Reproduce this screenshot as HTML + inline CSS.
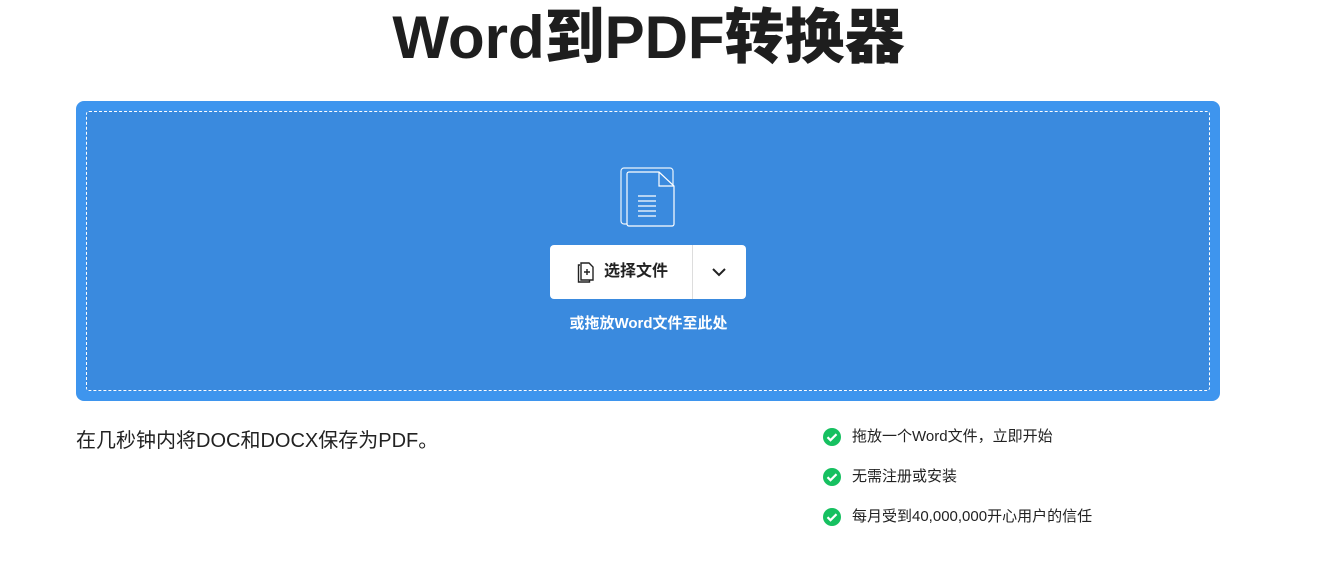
<!DOCTYPE html>
<html><head><meta charset="utf-8"><style>
body{margin:0;width:1317px;height:570px;background:#fff;font-family:"Liberation Sans","Noto Sans CJK SC",sans-serif;position:relative;overflow:hidden;color:#222}
h1{position:absolute;left:0;width:1297px;top:0;margin:0;text-align:center;font-size:60px;line-height:76px;font-weight:900;color:#1e1e1e;letter-spacing:0px}
.box{position:absolute;left:76px;top:101px;width:1144px;height:300px;background:#3e95ee;border-radius:8px}
.inner{position:absolute;left:10px;top:10px;right:10px;bottom:10px;background:#3a8ade;border:1px dashed #fff;border-radius:3px}
.btn{position:absolute;left:550px;top:245px;width:196px;height:54px;background:#fff;border-radius:4px}
.btn .sep{position:absolute;left:142px;top:0;width:1px;height:54px;background:#ddd}
.btn .t{position:absolute;left:54px;top:15px;font-size:16px;font-weight:bold;color:#222;line-height:24px}
.drop{position:absolute;left:0;width:1297px;top:313px;text-align:center;color:#fff;font-size:15px;font-weight:bold;line-height:22px}
.desc{position:absolute;left:76px;top:427px;font-size:20px;line-height:28px;color:#222}
.li{position:absolute;left:823px;font-size:15px;color:#222;line-height:20px}
.li svg{position:absolute;left:0;top:1px}
.li span{position:absolute;left:29px;white-space:nowrap}
</style></head><body>
<h1>Word到PDF转换器</h1>
<div class="box"><div class="inner"></div></div>
<svg style="position:absolute;left:618px;top:166px" width="60" height="62" viewBox="0 0 60 62" fill="none" stroke="#fff" stroke-width="1.2">
<rect x="3" y="2" width="52" height="56" rx="3" opacity=".9"/>
<path d="M11 6h30l15 14v38a2 2 0 0 1-2 2H11a2 2 0 0 1-2-2V8a2 2 0 0 1 2-2z" fill="#3a8ade"/>
<path d="M41 6v14h15"/>
<path d="M20 30h18M20 35h18M20 40h18M20 45h18M20 50h18"/>
</svg>
<div class="btn"><div class="sep"></div>
<svg style="position:absolute;left:27px;top:17px" width="18" height="21" viewBox="0 0 18 21" fill="none" stroke="#222" stroke-width="1.4"><path d="M3 3H1.5v17h11v-1.5"/><path d="M4 1h8l4 4v13H4z" fill="#fff"/><path d="M10 7v6M7 10h6"/></svg>
<div class="t">选择文件</div>
<svg style="position:absolute;left:162px;top:22px" width="14" height="10" viewBox="0 0 14 10" fill="none" stroke="#222" stroke-width="2"><path d="M1 2l6 6 6-6"/></svg>
</div>
<div class="drop">或拖放Word文件至此处</div>
<div class="desc">在几秒钟内将DOC和DOCX保存为PDF。</div>
<div class="li" style="top:427px"><svg width="18" height="18"><circle cx="9" cy="9" r="9" fill="#16c060"/><path d="M4.5 9.2l3 3 6-6" stroke="#fff" stroke-width="2.2" fill="none"/></svg><span>拖放一个Word文件，立即开始</span></div>
<div class="li" style="top:467px"><svg width="18" height="18"><circle cx="9" cy="9" r="9" fill="#16c060"/><path d="M4.5 9.2l3 3 6-6" stroke="#fff" stroke-width="2.2" fill="none"/></svg><span>无需注册或安装</span></div>
<div class="li" style="top:507px"><svg width="18" height="18"><circle cx="9" cy="9" r="9" fill="#16c060"/><path d="M4.5 9.2l3 3 6-6" stroke="#fff" stroke-width="2.2" fill="none"/></svg><span>每月受到40,000,000开心用户的信任</span></div>
</body></html>
